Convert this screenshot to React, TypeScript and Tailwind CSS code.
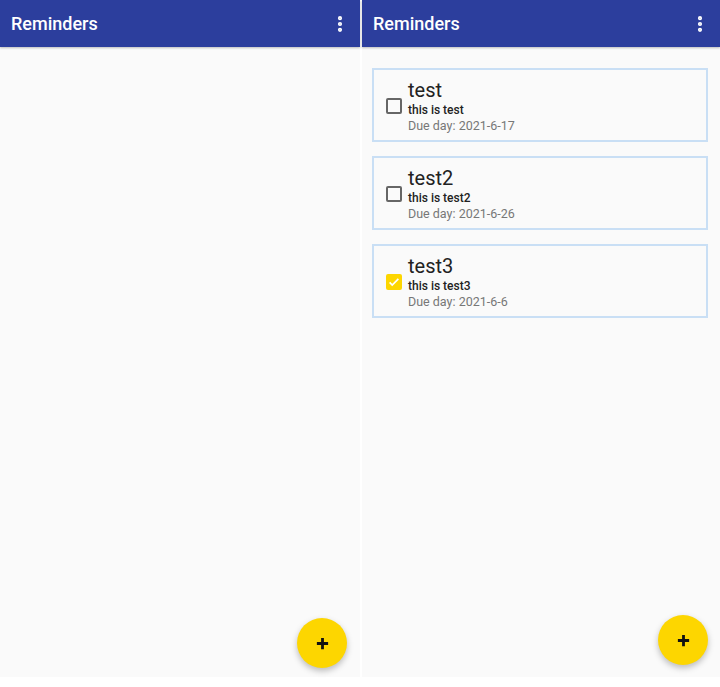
import { EllipsisVertical } from "lucide-react";

type Reminder = {
  title: string;
  body: string;
  due: string;
  done: boolean;
};

const reminders: Reminder[] = [
  { title: "test", body: "this is test", due: "2021-6-17", done: false },
  { title: "test2", body: "this is test2", due: "2021-6-26", done: false },
  { title: "test3", body: "this is test3", due: "2021-6-6", done: true },
];

function AppBar() {
  return (
    <div className="flex h-[47px] items-center justify-between bg-[#2c3e9d] pl-[11px] pr-[10px] shadow-[0_1px_2px_rgba(0,0,0,0.25)]">
      <span className="text-[18px] font-medium text-white">Reminders</span>
      <EllipsisVertical className="size-[20px] text-white" strokeWidth={3} />
    </div>
  );
}

function Fab({ className }: { className: string }) {
  return (
    <button
      type="button"
      className={
        "absolute flex size-[50px] items-center justify-center rounded-full bg-[#fdd600] shadow-[0_3px_6px_rgba(0,0,0,0.25)] " +
        className
      }
    >
      <svg viewBox="0 0 16 16" className="size-[15px]" aria-hidden>
        <path d="M8 2v12M2 8h12" stroke="#111" strokeWidth="3" />
      </svg>
    </button>
  );
}

function CheckBox({ checked }: { checked: boolean }) {
  if (checked) {
    return (
      <div className="flex size-[16px] items-center justify-center rounded-[2px] bg-[#fdd600]">
        <svg viewBox="0 0 16 16" className="size-[14px]" aria-hidden>
          <path d="M3 8.5l3 3 7-7" fill="none" stroke="white" strokeWidth="2" />
        </svg>
      </div>
    );
  }
  return <div className="size-[16px] rounded-[2px] border-2 border-[#666]" />;
}

function ReminderCard({ r }: { r: Reminder }) {
  return (
    <div className="flex h-[74px] items-center border-2 border-[#c9dff5] bg-[#fafafa]">
      <div className="ml-[12px] mt-[2px]">
        <CheckBox checked={r.done} />
      </div>
      <div className="ml-[6px] mt-[3px] flex flex-col">
        <span className="text-[20px] leading-[22px] text-[#222]">{r.title}</span>
        <span className="mt-[1px] text-[12px] font-medium leading-[16px] text-[#222]">
          {r.body}
        </span>
        <span className="text-[12.5px] leading-[16px] text-[#777]">
          Due day: {r.due}
        </span>
      </div>
    </div>
  );
}

export default function App() {
  return (
    <div
      className="flex h-[687px] w-[720px] items-start gap-[2px] bg-white"
      style={{ fontFamily: "Roboto, 'Noto Sans', sans-serif" }}
    >
      <div className="relative flex h-[677px] w-[360px] flex-col bg-[#fafafa]">
        <AppBar />
        <Fab className="bottom-[9px] right-[13px]" />
      </div>
      <div className="relative flex h-[677px] w-[358px] flex-col bg-[#fafafa]">
        <AppBar />
        <div className="flex flex-col gap-[14px] pl-[10px] pr-[12px] pt-[21px]">
          {reminders.map((r) => (
            <ReminderCard key={r.title} r={r} />
          ))}
        </div>
        <Fab className="bottom-[12px] right-[12px]" />
      </div>
    </div>
  );
}
